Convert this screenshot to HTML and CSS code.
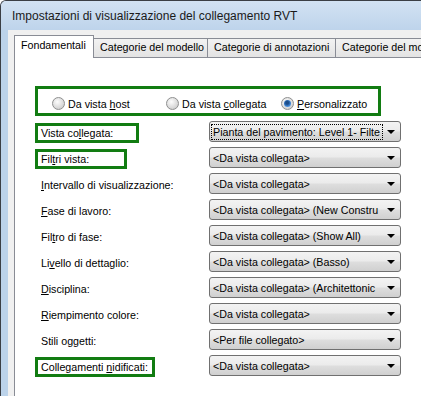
FILE: index.html
```html
<!DOCTYPE html>
<html>
  <head>
    <meta charset="utf-8" />
    <title>Impostazioni di visualizzazione del collegamento RVT</title>
    <link rel="stylesheet" href="styles.css">
  </head>
  <body>
    <div class="window">
      <div class="titlebar">Impostazioni di visualizzazione del collegamento RVT</div>
      <div class="frame">
        <div class="client">
          <div class="tabs">
            <div class="tab selected">Fondamentali</div>
            <div class="tab tab_model">Categorie del modello</div>
            <div class="tab tab_annot">Categorie di annotazioni</div>
            <div class="tab">Categorie del modello importate</div>
          </div>

          <div class="panel">
            <div class="radio_group mark">
              <label class="radio"><span class="dot"></span><span>Da vista <u>h</u>ost</span></label>
              <label class="radio"><span class="dot"></span><span>Da vista <u>c</u>ollegata</span></label>
              <label class="radio"><span class="dot checked"></span><span><u>P</u>ersonalizzato</span></label>
            </div>

            <div class="fields">
              <div class="lbl mark w_linked">Vista co<u>l</u>legata:</div>
              <div class="combo"><span class="focus_rect">Pianta del pavimento: Level 1- Filte</span><span class="arrow"></span></div>

              <div class="lbl mark w_filters">Fil<u>t</u>ri vista:</div>
              <div class="combo"><span>&lt;Da vista collegata&gt;</span><span class="arrow"></span></div>

              <div class="lbl"><u>I</u>ntervallo di visualizzazione:</div>
              <div class="combo"><span>&lt;Da vista collegata&gt;</span><span class="arrow"></span></div>

              <div class="lbl"><u>F</u>ase di lavoro:</div>
              <div class="combo"><span>&lt;Da vista collegata&gt; (New Constru</span><span class="arrow"></span></div>

              <div class="lbl">Fil<u>t</u>ro di fase:</div>
              <div class="combo"><span>&lt;Da vista collegata&gt; (Show All)</span><span class="arrow"></span></div>

              <div class="lbl">Li<u>v</u>ello di dettaglio:</div>
              <div class="combo"><span>&lt;Da vista collegata&gt; (Basso)</span><span class="arrow"></span></div>

              <div class="lbl"><u>D</u>isciplina:</div>
              <div class="combo"><span>&lt;Da vista collegata&gt; (Architettonic</span><span class="arrow"></span></div>

              <div class="lbl"><u>R</u>iempimento colore:</div>
              <div class="combo"><span>&lt;Da vista collegata&gt;</span><span class="arrow"></span></div>

              <div class="lbl">Stili o<u>g</u>getti:</div>
              <div class="combo"><span>&lt;Per file collegato&gt;</span><span class="arrow"></span></div>

              <div class="lbl mark w_nested">Collegamenti <u>n</u>idificati:</div>
              <div class="combo"><span>&lt;Da vista collegata&gt;</span><span class="arrow"></span></div>
            </div>
          </div>
        </div>
      </div>
    </div>
  </body>
</html>
```

FILE: styles.css
```css
html, body
{
  margin: 0;
  padding: 0;
  width: 421px;
  height: 396px;
  overflow: hidden;
  background-color: #fff;
}
.window
{
  width: 460px;
  height: 420px;
  border-top: 1px solid #3b3f45;
  border-left: 1px solid #3b3f45;
  border-top-left-radius: 6px;
  background-color: #bcd3ea;
  overflow: hidden;
  font-family: "Liberation Sans", Arial, sans-serif;
  color: #000;
}
.titlebar
{
  height: 29px;
  padding-left: 11px;
  line-height: 30px;
  font-size: 12px;
  color: #1a1a1a;
  background: linear-gradient(#d2e2f3, #bed4eb);
}
.frame
{
  padding-left: 7px;
  height: 400px;
}
.client
{
  background-color: #f0f0f0;
  padding: 5px 0 0 6px;
  height: 400px;
  font-size: 10.7px;
}

/* tabs ======================================================================= */
.tabs
{
  display: flex;
  align-items: flex-end;
  height: 22px;
  position: relative;
  z-index: 1;
}
.tab
{
  box-sizing: border-box;
  height: 19px;
  line-height: 17px;
  padding: 0 6px;
  border: 1px solid #898c95;
  border-bottom: none;
  border-left: none;
  background: linear-gradient(#f2f2f2, #e3e3e3);
  white-space: nowrap;
  flex-shrink: 0;
}
.tab_model
{
  width: 114px;
}
.tab_annot
{
  width: 128px;
}
.tab.selected
{
  width: 80px;
  height: 23px;
  margin-bottom: -1px;
  line-height: 19px;
  padding: 0 0 0 6px;
  border-left: 1px solid #898c95;
  background: #fff;
}
.panel
{
  border: 1px solid #898c95;
  background-color: #fff;
  height: 360px;
  padding: 28px 0 0 20px;
}

/* green highlight marks ======================================================= */
.mark
{
  border: 3px solid #127c12;
}

/* radio buttons ================================================================ */
.radio_group
{
  box-sizing: border-box;
  width: 346px;
  height: 30px;
  display: grid;
  grid-template-columns: 114px 115px auto;
  align-items: center;
  padding: 5px 0 0 14px;
}
.radio
{
  display: flex;
  align-items: center;
  gap: 3px;
  white-space: nowrap;
}
.dot
{
  box-sizing: border-box;
  width: 13px;
  height: 13px;
  border-radius: 50%;
  border: 1px solid #8e8f8f;
  background: radial-gradient(circle at 40% 35%, #fdfdfd, #d4d4d4 70%, #bcbcbc);
  position: relative;
}
.dot.checked::after
{
  content: "";
  position: absolute;
  left: 2px;
  top: 2px;
  width: 7px;
  height: 7px;
  border-radius: 50%;
  background: radial-gradient(circle at 45% 40%, #1c4d8a 25%, #3f86d6 60%, #8cc2f2);
}

/* field grid ==================================================================== */
.fields
{
  display: grid;
  grid-template-columns: 174px 192px;
  grid-auto-rows: 21px;
  row-gap: 5px;
  margin-top: 5px;
}
.lbl
{
  box-sizing: border-box;
  height: 20px;
  align-self: center;
  margin-top: 2px;
  line-height: 14px;
  padding: 0 3px;
  border: 3px solid transparent;
  white-space: nowrap;
}
.lbl.mark
{
  border-color: #127c12;
}
.w_linked
{
  width: 104px;
}
.w_filters
{
  width: 92px;
}
.w_nested
{
  width: 120px;
}
.combo
{
  box-sizing: border-box;
  height: 21px;
  border: 1px solid #707070;
  border-radius: 3px;
  background: linear-gradient(#f3f3f3 0%, #ebebeb 48%, #dedede 52%, #d0d0d0 100%);
  display: flex;
  align-items: center;
  padding-left: 3px;
  position: relative;
  white-space: nowrap;
  overflow: hidden;
}
.focus_rect
{
  outline: 1px dotted #000;
  margin-left: -1px;
  padding: 0 1px;
  line-height: 14px;
  width: 168px;
  overflow: hidden;
}
.arrow
{
  position: absolute;
  right: 5px;
  top: 8px;
  width: 0;
  height: 0;
  border-left: 4px solid transparent;
  border-right: 4px solid transparent;
  border-top: 4px solid #000;
}
```
